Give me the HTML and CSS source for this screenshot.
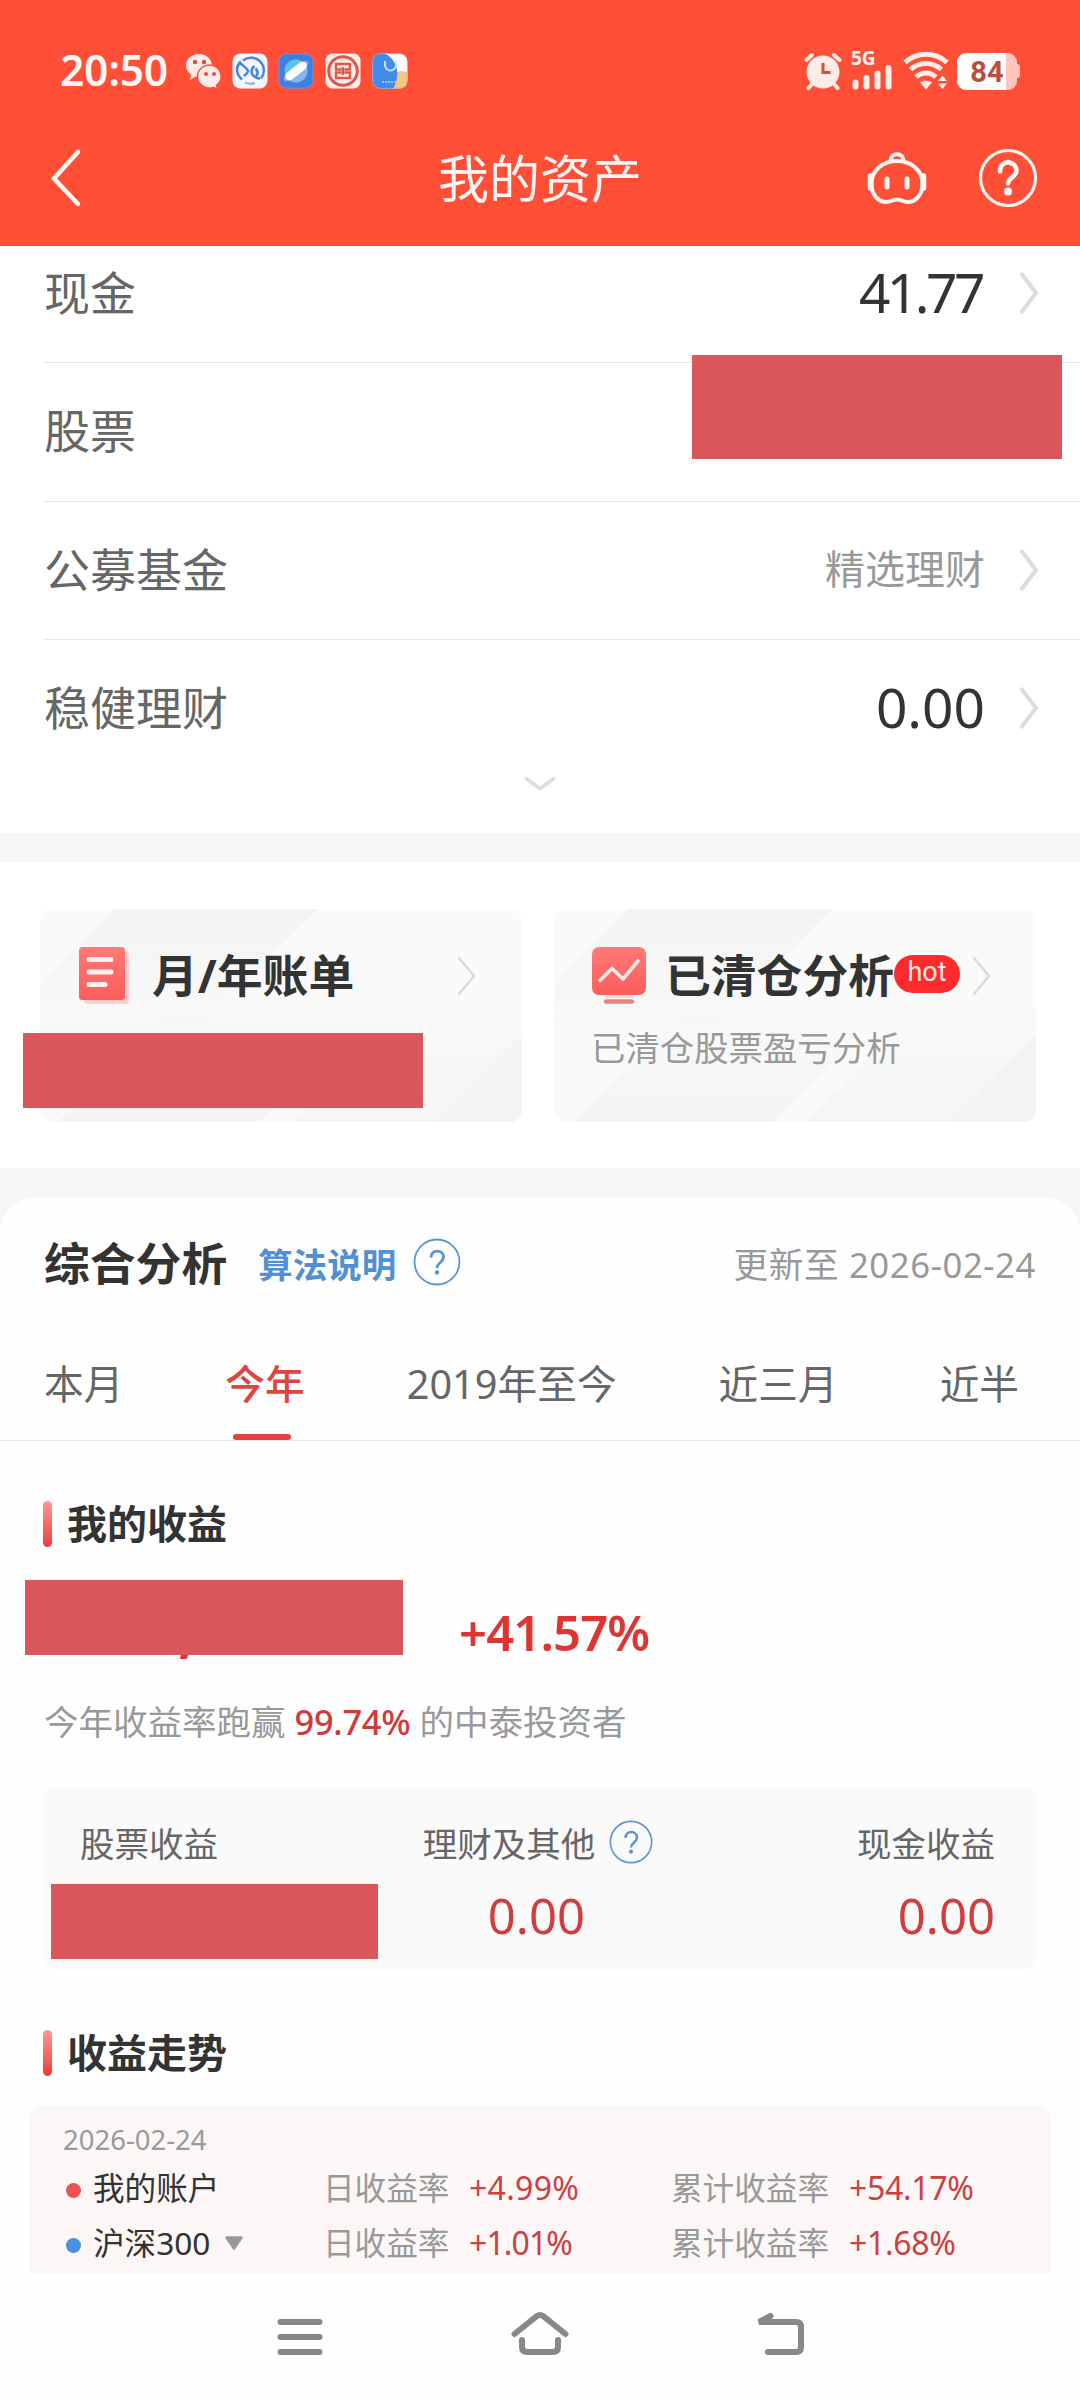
FILE: index.html
```html
<!DOCTYPE html>
<html lang="zh-CN">
<head>
  <meta charset="UTF-8">
  <title>我的资产</title>
  <link rel="stylesheet" href="styles.css">
</head>
<body>
  <header class="header">
    <div class="status">
      <span class="time">20:50</span>
      <div class="apps">
        <svg width="36" height="36" viewBox="0 0 36 36">
          <g fill="#ffece8">
            <path d="M14 1C6.500 1 1 6 1 12.500c0 4 2 7 5 9L5 27l5.500-3.500c1 .3 2.200.5 3.500.5 7 0 13-5 13-11.500S21 1 14 1z"/>
            <path stroke="#ff5037" stroke-width="1.500" d="M24.500 12C18 12 12.500 17 12.500 23.500S18 35 24.500 35c1.500 0 3-.2 4-.7l4 2-1-4c3-2 4.700-5 4.700-8.800C36 17 31 12 24.500 12z"/>
          </g>
          <g fill="#d8503c"><circle cx="10" cy="9" r="2.200"/><circle cx="19" cy="9" r="2.200"/><circle cx="21" cy="21" r="2"/><circle cx="29" cy="21" r="2"/></g>
        </svg>
        <svg width="36" height="36" viewBox="0 0 36 36">
          <rect x=".5" y=".5" width="35" height="35" rx="8" fill="#f3f6fe"/>
          <path d="M11 7.500a12.800 12.800 0 0 1 18 18" fill="none" stroke="#4b84d8" stroke-width="2.400"/>
          <path d="M23 30a13 13 0 0 1-10-.5" fill="none" stroke="#a9b4c8" stroke-width="2.400"/>
          <path d="M10 26.500C4 21 3.500 14 8 9.500c2 3 7.500 5.500 8 8.500.2 1.500-2.500 3.500-4 5M28 25.500c-4 0-8.500-3-8.500-7 0-2 1-4 3-5.500M24 23c2.500-2.500 2-5-.5-7.500" fill="none" stroke="#3f86dc" stroke-width="2.500"/>
        </svg>
        <svg width="36" height="36" viewBox="0 0 36 36">
          <rect x=".8" y=".8" width="34.400" height="34.400" rx="8" fill="#407fe0" stroke="#8a87cf"/>
          <circle cx="18" cy="18" r="11.500" fill="#5bc3f3"/>
          <path d="M29 15a11.500 11.500 0 0 1-20 10z" fill="#8fb2ef"/>
          <ellipse cx="18" cy="18" rx="15" ry="5" fill="#8fb2ef" transform="rotate(-38 18 18)"/>
          <rect x="5.500" y="13.800" width="25" height="8.400" rx="4.200" fill="#fff" transform="rotate(-38 18 18)"/>
        </svg>
        <svg width="36" height="36" viewBox="0 0 36 36">
          <rect x=".5" y=".5" width="35" height="35" rx="7" fill="#fdebe7"/>
          <circle cx="18" cy="18" r="14.300" fill="none" stroke="#d9594b" stroke-width="3"/>
          <path d="M16.500 16.500h-5.500v-5.500h14v5.500h-5.500M16.500 19.500h-5.500V25h14v-5.500h-5.500M18 14v8" fill="none" stroke="#d9594b" stroke-width="2.400"/>
        </svg>
        <svg width="36" height="36" viewBox="0 0 36 36">
          <clipPath id="bag"><rect x=".5" y=".5" width="35" height="35" rx="8"/></clipPath>
          <g clip-path="url(#bag)">
            <path fill="#fff" d="M0 0h36v36H0z"/>
            <circle cx="30" cy="30" r="12" fill="#f3c982"/>
            <path fill="#418be9" d="M0 0h11c7 2 12 8 14 17 1 7-1 14-4 19H0z"/>
          </g>
          <path d="M13 8v4a5.500 5.500 0 0 0 11 0V8" fill="none" stroke="#c8e0ff" stroke-width="2"/>
          <path d="M10 29h15" stroke="#b9d5fa" stroke-width="1.600" stroke-dasharray="2 1"/>
          <rect x=".8" y=".8" width="34.400" height="34.400" rx="8" fill="none" stroke="#a79bd0" stroke-opacity=".5"/>
        </svg>
      </div>
      <div class="signals">
        <svg width="38" height="38" viewBox="0 0 38 38">
          <path d="M2.500 8L8 3M30 3l5.500 5M9 31l-4.500 5M29 31l4.500 5" stroke="#ffece8" stroke-width="4" stroke-linecap="round"/>
          <circle cx="19" cy="20" r="16.500" fill="#ffece8"/>
          <path d="M19 11v9.500h7.500" fill="none" stroke="#cf5040" stroke-width="3"/>
        </svg>
        <div class="cell">
          <span class="net">5G</span>
          <svg width="42" height="26" viewBox="0 0 42 26">
            <path d="M4.500 18.500v4M15.500 14v8.500M26.500 9.500v13M37.500 4v18.500" stroke="#ffece8" stroke-width="6" stroke-linecap="round"/>
          </svg>
        </div>
        <svg width="46" height="38" viewBox="0 0 46 38">
          <g fill="none" stroke="#ffece8" stroke-width="5">
            <path d="M2 10.500C14-.500 32-.500 44 10.500"/>
            <path d="M7.500 17.500c9-8 22-8 31 0"/>
            <path d="M13 25c6-5.500 14-5.500 20 0"/>
          </g>
          <path fill="#ffece8" d="M17 30.500c3-2.500 9-2.500 12 0l-6 7zM35 29l4.500-5.500L44 29zM35 31.500h9L39.500 37z"/>
        </svg>
        <div class="battery"><span>84</span></div>
      </div>
    </div>
    <div class="navbar">
      <svg class="back" width="32" height="60" viewBox="0 0 32 60"><path d="M28 4L4 30.500 28 56" fill="none" stroke="#fff5f2" stroke-width="4.500" stroke-linecap="round"/></svg>
      <h1>我的资产</h1>
      <div class="tools">
        <svg width="62" height="56" viewBox="0 0 62 56" fill="none" stroke="#fff5f2" stroke-width="4">
          <path d="M31 11c14 0 25.500 9 25.500 23 0 11-7 18-15 18-5 0-5.500-2.500-10.500-2.500S25.500 52 20.500 52c-8 0-15-7-15-18C5.500 20 17 11 31 11z"/>
          <path d="M24.500 11c0-9 13-9 13 0"/>
          <path d="M4.500 26v12M57.500 26v12" stroke-width="5.500" stroke-linecap="round"/>
          <path d="M21 29v8M41 29v8" stroke-width="5" stroke-linecap="round"/>
        </svg>
        <svg width="60" height="60" viewBox="0 0 60 60" fill="none" stroke="#fff5f2">
          <circle cx="30" cy="30" r="27.500" stroke-width="3.200"/>
          <path d="M22 23.500c0-13 16.500-11 16.500-1 0 7-8.500 6.500-8.500 13" stroke-width="4.600" stroke-linecap="round"/>
          <circle cx="30" cy="43.500" r="4" fill="#fff5f2" stroke="none"/>
        </svg>
      </div>
    </div>
  </header>

  <section class="assets">
    <div class="row first">
      <span>现金</span><b class="tight">41.77</b>
      <svg class="arrow"><use href="#arrow"/></svg>
    </div>
    <div class="row">
      <span>股票</span>
      <i class="mask mask-stock"></i>
    </div>
    <div class="row">
      <span>公募基金</span><em>精选理财</em>
      <svg class="arrow"><use href="#arrow"/></svg>
    </div>
    <div class="row last">
      <span>稳健理财</span><b>0.00</b>
      <svg class="arrow"><use href="#arrow"/></svg>
    </div>
    <svg class="more" width="36" height="18" viewBox="0 0 36 18"><path d="M4 3.500l14 10 14-10" fill="none" stroke="#ddd" stroke-width="3.500" stroke-linecap="round"/></svg>
  </section>

  <section class="cards">
    <div class="card">
      <div class="card-head">
        <svg class="card-icon" width="56" height="60" viewBox="0 0 56 60">
          <defs><linearGradient id="red" x1="0" y1="0" x2="0" y2="1"><stop offset="0" stop-color="#ff7a76"/><stop offset="1" stop-color="#fb5d5b"/></linearGradient></defs>
          <rect x="6" y="6" width="45" height="53" rx="4" fill="#ffd0cd"/>
          <rect x="1" y="2" width="46" height="53" rx="3.500" fill="url(#red)"/>
          <path d="M11 14.500h22M11 27h22M11 39.500h16" stroke="#fff0ee" stroke-width="5" stroke-linecap="round"/>
        </svg>
        <h2>月/年账单</h2>
        <svg class="thin" width="22" height="42"><use href="#thin"/></svg>
      </div>
      <i class="mask mask-bill"></i>
    </div>
    <div class="card">
      <div class="card-head">
        <svg class="card-icon" width="56" height="60" viewBox="0 0 56 60">
          <path d="M15 50h26l2 3H13z" fill="#ffd7d4"/>
          <rect x="1" y="2" width="54" height="48" rx="7" fill="url(#red)"/>
          <path d="M9 35.500l12-12 11 10.500 15-18" fill="none" stroke="#ffe8e6" stroke-width="3.600" stroke-linecap="round" stroke-linejoin="round"/>
          <path d="M15 56.500h26" stroke="#e98380" stroke-width="4.400" stroke-linecap="round"/>
        </svg>
        <h2>已清仓分析</h2>
        <span class="hot">hot</span>
        <svg class="thin" width="22" height="42"><use href="#thin"/></svg>
      </div>
      <p>已清仓股票盈亏分析</p>
    </div>
  </section>

  <section class="analysis">
    <div class="title">
      <h2>综合分析</h2>
      <a>算法说明</a>
      <svg class="help" width="48" height="48"><use href="#help"/></svg>
      <span class="updated">更新至 2026-02-24</span>
    </div>

    <nav class="tabs">
      <span>本月</span>
      <span class="active">今年</span>
      <span>2019年至今</span>
      <span>近三月</span>
      <span>近半</span>
    </nav>

    <h3>我的收益</h3>
    <div class="profit">
      <span class="comma">,</span>
      <i class="mask mask-profit"></i>
      <strong>+41.57%</strong>
    </div>
    <p class="beat">今年收益率跑赢 <b>99.74%</b> 的中泰投资者</p>

    <div class="stats">
      <div class="stat">
        <span>股票收益</span>
        <i class="mask mask-gain"></i>
      </div>
      <div class="stat middle">
        <span>理财及其他 <svg width="44" height="44" viewBox="0 0 48 48"><use href="#help"/></svg></span>
        <b>0.00</b>
      </div>
      <div class="stat end">
        <span>现金收益</span>
        <b>0.00</b>
      </div>
    </div>

    <h3 class="trend-title">收益走势</h3>
    <div class="trend">
      <time>2026-02-24</time>
      <div class="line">
        <i class="dot"></i><span class="name">我的账户</span>
        <span>日收益率</span><b>+4.99%</b>
        <span>累计收益率</span><b>+54.17%</b>
      </div>
      <div class="line">
        <i class="dot blue"></i>
        <span class="name">沪深300 <svg width="20" height="16" viewBox="0 0 20 16"><path d="M2.500 2.500h15L10 13.500z" fill="#999" stroke="#999" stroke-width="2.500" stroke-linejoin="round"/></svg></span>
        <span>日收益率</span><b class="narrow">+1.01%</b>
        <span>累计收益率</span><b>+1.68%</b>
      </div>
    </div>
  </section>

  <footer class="system-nav">
    <svg width="60" height="50" viewBox="0 0 60 50"><path d="M10.500 12h39M10.500 27h39M10.500 42h39"/></svg>
    <svg width="60" height="50" viewBox="0 0 60 50"><path d="M4.500 24L27 6q3-2 6 0l22.500 18M12 30v7q0 5 5 5h26q5 0 5-5v-7"/></svg>
    <svg width="60" height="50" viewBox="0 0 60 50"><path d="M20.500 6L9 12h37q5 0 5 5v20q0 5-5 5H18"/></svg>
  </footer>

  <svg class="symbols" width="0" height="0">
    <symbol id="arrow" viewBox="0 0 22 44"><path d="M4 4.500L18 23 4 41.500" fill="none" stroke="#ddd" stroke-width="4.200" stroke-linecap="round"/></symbol>
    <symbol id="thin" viewBox="0 0 22 42"><path d="M3 4l15 18L3 40" fill="none" stroke="#dcdcdc" stroke-width="2.700" stroke-linecap="round"/></symbol>
    <symbol id="help" viewBox="0 0 48 48">
      <g fill="none" stroke="#5a94d4">
        <circle cx="24" cy="24" r="22.500" stroke-width="1.800"/>
        <path d="M18 19.500c0-9 12.500-8 12.500-.5 0 5.500-6.500 5.500-6.500 11" stroke-width="2.800"/>
      </g>
      <circle cx="24" cy="34.500" r="2.200" fill="#5a94d4"/>
    </symbol>
  </svg>
</body>
</html>
```
FILE: styles.css
```css
* {
  box-sizing: border-box;
}
body {
  margin: 0;
  width: 1080px;
  height: 2400px;
  overflow: hidden;
  display: flex;
  flex-direction: column;
  background: #f6f6f6;
  color: #333;
  font-family: "Noto Sans", "Noto Sans CJK SC", sans-serif;
}
h1, h2, h3, p {
  margin: 0;
}
b, em, i {
  font-weight: normal;
  font-style: normal;
}
svg {
  display: block;
  flex: none;
}
.mask {
  position: absolute;
  background: #da565b;
}

/* header */
.header {
  height: 246px;
  flex: none;
  background: #ff5037;
  color: #fff5f2;
}
.status {
  height: 142px;
  display: flex;
  align-items: center;
  padding: 0 60px;
}
.time {
  width: 125px;
  margin-top: -3px;
  font-size: 42.500px;
  font-weight: 600;
  line-height: 50px;
  letter-spacing: -0.200px;
}
.apps {
  display: flex;
  gap: 10.700px;
}
.signals {
  margin-left: auto;
  display: flex;
  align-items: center;
}
.cell {
  width: 44px;
  height: 38px;
  margin: 0 8px 0 9px;
  display: flex;
  flex-direction: column;
}
.net {
  height: 12px;
  font-size: 19px;
  font-weight: bold;
  line-height: 13px;
}
.battery {
  width: 60px;
  height: 37px;
  margin: 0 3px 0 8px;
  position: relative;
  border-radius: 9px;
  background: linear-gradient(90deg, #fff 49px, #ffc5bb 49px);
  color: #bc4d3e;
  font: bold 29px/38px Roboto, sans-serif;
  text-align: center;
}
.battery::after {
  content: "";
  position: absolute;
  right: -3px;
  top: 11px;
  width: 3px;
  height: 14px;
  border-radius: 0 3px 3px 0;
  background: #ffc5bb;
}
.navbar {
  height: 72px;
  display: grid;
  grid-template-columns: 1fr auto 1fr;
  align-items: center;
  padding: 0 42px 0 42px;
}
.back {
  margin-left: 8px;
}
.navbar h1 {
  font-size: 51px;
  font-weight: 400;
  line-height: 60px;
}
.tools {
  display: flex;
  justify-content: flex-end;
  align-items: center;
  gap: 50px;
}

/* asset list */
.assets {
  height: 587px;
  background: #fff;
}
.row {
  height: 138.500px;
  margin-left: 43px;
  padding: 0 40px 2px 0;
  display: flex;
  align-items: center;
  position: relative;
  border-bottom: 1px solid #e8e8e8;
  font-size: 46px;
  line-height: 60px;
}
.row.first {
  height: 117px;
  padding-bottom: 24px;
}
.row.last {
  height: 134px;
  padding-bottom: 0;
  border: 0;
}
.row span {
  margin: -1px auto 0 1px;
  color: #666;
}
.row b {
  font-size: 55px;
}
.row .tight {
  margin-right: 3px;
  letter-spacing: -3.500px;
}
.row em {
  font-size: 40px;
  color: #999;
}
.arrow {
  width: 22px;
  height: 44px;
  margin-left: 33px;
}
.mask-stock {
  left: 649px;
  top: -8px;
  width: 370px;
  height: 104px;
}
.more {
  margin: 1px auto 0;
}

/* shortcut cards */
.cards {
  height: 306px;
  margin: 29px 0;
  padding: 47px 44px 46px 40px;
  display: grid;
  grid-template-columns: 482px 482px;
  gap: 32px;
  background: #fff;
}
.card {
  position: relative;
  z-index: 0;
  height: 213px;
  padding: 36px 38px;
  border-radius: 12px;
  background: linear-gradient(135deg, #fafafa 429px, #f4f4f4 430px);
}
/* diagonal stripes, fading towards the middle of the card */
.card::before, .card::after {
  content: "";
  position: absolute;
  inset: 0;
  z-index: -1;
  border-radius: 12px;
}
.card::before {
  background: linear-gradient(135deg, transparent 52px, #f3f3f3 53px 196px, transparent 197px);
  mask-image: linear-gradient(#000, transparent 60%);
}
.card::after {
  background: linear-gradient(135deg, transparent 163px, #f4f4f4 164px 305px, transparent 306px 327px, #f5f5f5 328px 429px, transparent 430px);
  mask-image: linear-gradient(transparent 45%, #000);
}
.card:last-child {
  padding-right: 43px;
  padding-left: 37px;
}
.card-head {
  height: 60px;
  display: flex;
  align-items: center;
}
.card-icon {
  margin-right: 18px;
}
.card h2, .title h2 {
  font-size: 45.800px;
  font-weight: bold;
  line-height: 60px;
  white-space: nowrap;
}
.thin {
  margin-left: auto;
  margin-right: 6px;
}
.card:last-child .thin {
  margin-right: 0;
}
.hot {
  width: 66px;
  height: 38px;
  margin-top: -3px;
  flex: none;
  border-radius: 19px;
  background: #ff2b2b;
  color: #ffe6e6;
  font: 27px/34px Roboto, sans-serif;
  text-align: center;
}
.card p {
  margin-top: 23px;
  font-size: 34.400px;
  line-height: 40px;
  color: #999;
}
.mask-bill {
  left: -17px;
  top: 124px;
  width: 400px;
  height: 75px;
}

/* analysis */
.analysis {
  height: 1077px;
  overflow: hidden;
  border-radius: 36px 36px 0 0;
  background: #fefefe;
}
.title {
  height: 134px;
  padding: 0 44px 3px;
  display: flex;
  align-items: center;
}
.title a {
  margin: 1px 17px 0 31px;
  color: #5090d3;
  font-size: 34.500px;
  font-weight: bold;
}
.help {
  margin-top: -1px;
}
.updated {
  margin-left: auto;
  font-size: 34.700px;
  letter-spacing: 0.600px;
  color: #999;
}
.tabs {
  height: 110px;
  padding: 0 61px 0 44px;
  display: flex;
  justify-content: space-between;
  border-bottom: 1px solid #e6e6e6;
  color: #666;
  font-size: 39.700px;
  line-height: 106px;
}
.tabs .active {
  position: relative;
  color: #e04440;
  font-weight: 500;
}
.active::after {
  content: "";
  position: absolute;
  left: 8px;
  bottom: 0;
  width: 58px;
  height: 6px;
  border-radius: 3px;
  background: #e24340;
}
h3 {
  height: 46px;
  margin: 60px 0 0 43px;
  display: flex;
  align-items: center;
  gap: 15px;
  font-size: 40px;
  line-height: 44px;
  padding-bottom: 1px;
}
h3::before {
  content: "";
  width: 9px;
  height: 46px;
  flex: none;
  border-radius: 5px;
  background: linear-gradient(#f99a94, #f43b3b);
}
.profit {
  position: relative;
  height: 112px;
  margin-top: 33px;
  padding: 19px 0 0 459px;
  color: #dd3434;
}
.profit strong {
  font-size: 49px;
  font-weight: 600;
  line-height: 66px;
  letter-spacing: -0.900px;
}
.comma {
  position: absolute;
  left: 178px;
  top: 7px;
  font-size: 62px;
  font-weight: bold;
  line-height: 80px;
}
.mask-profit {
  left: 25px;
  top: 0;
  width: 378px;
  height: 75px;
}
.beat {
  margin: 10px 0 0 44px;
  color: #999;
  font-size: 34.500px;
  line-height: 40px;
}
.beat b {
  color: #cf3a3a;
  font-weight: 500;
  letter-spacing: -0.300px;
}
.stats {
  height: 184px;
  margin: 44px 44px 0;
  padding: 31px 41px 0 36px;
  display: flex;
  justify-content: space-between;
  border-radius: 12px;
  background: #fafafa;
}
.stat {
  position: relative;
  display: flex;
  flex-direction: column;
  color: #666;
  font-size: 34.500px;
}
.stat span {
  height: 50px;
  display: flex;
  align-items: center;
  gap: 14px;
}
.stat b {
  margin-top: 15px;
  color: #d23c3c;
  font-size: 49px;
  line-height: 66px;
}
.middle {
  margin-left: 1px;
}
.middle b {
  margin-left: 65px;
}
.end {
  align-items: flex-end;
}
.mask-gain {
  left: -29px;
  top: 67px;
  width: 327px;
  height: 75px;
}
.trend {
  height: 180px;
  margin: 30px 29px 0;
  padding: 20px 34px 0;
  border-radius: 12px;
  background: #fcf6f6;
}
.trend time {
  display: block;
  font-size: 27.500px;
  line-height: 28px;
  color: #999;
}
.line {
  height: 55px;
  margin-top: 6px;
  display: grid;
  grid-template-columns: 30px 230px 146px 202px 178px auto;
  align-items: center;
  color: #999;
  font-size: 31.600px;
  line-height: 40px;
}
.line + .line {
  margin-top: 0;
}
.line .name {
  display: flex;
  align-items: center;
  gap: 14px;
  color: #333;
}
.line b {
  color: #c94141;
  font-size: 32px;
  letter-spacing: 0.300px;
}
.line b:last-child {
  letter-spacing: -0.300px;
}
.line .narrow {
  letter-spacing: -0.900px;
}
.dot {
  width: 15px;
  height: 15px;
  margin: 6px 0 0 3px;
  border-radius: 50%;
  background: #eb5155;
}
.dot.blue {
  background: #4a8fe0;
}

/* system buttons */
.system-nav {
  height: 126px;
  padding: 36px 270px 0;
  display: flex;
  justify-content: space-between;
  background: #fefefe;
}
.system-nav svg {
  fill: none;
  stroke: #888;
  stroke-width: 6;
  stroke-linecap: round;
}
.symbols {
  position: absolute;
}
```
